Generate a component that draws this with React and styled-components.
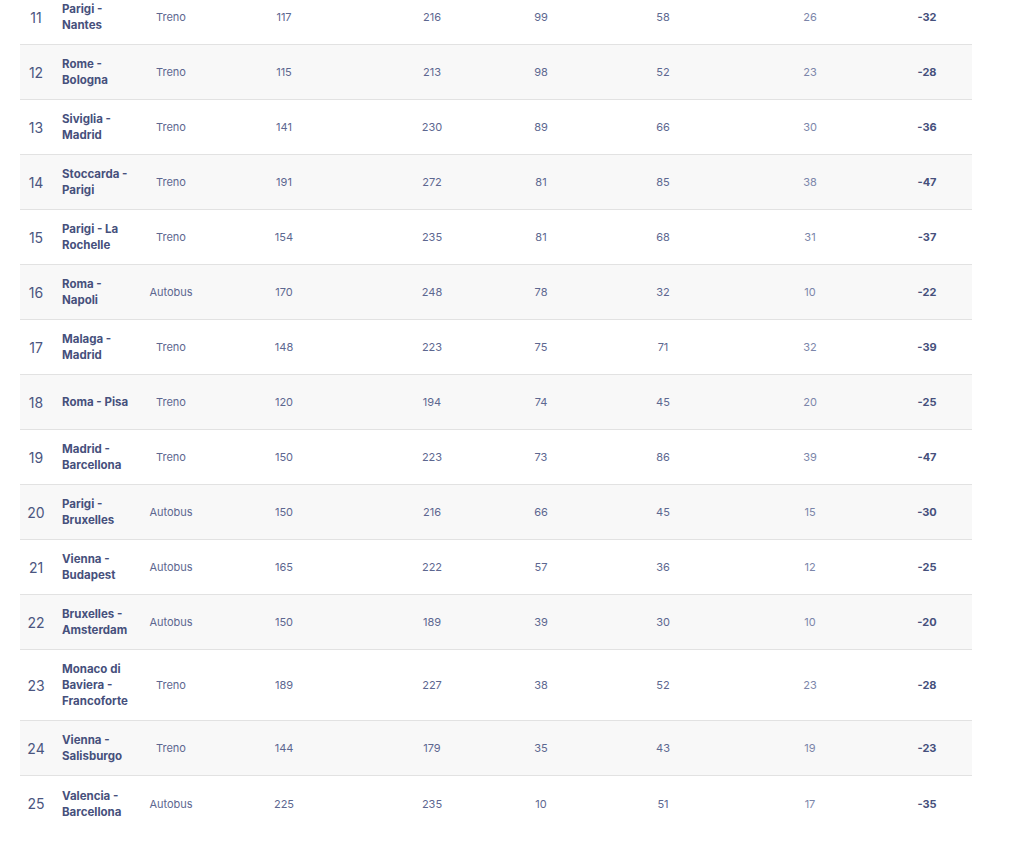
import React from "react";
import styled, { createGlobalStyle } from "styled-components";

const GlobalStyle = createGlobalStyle`
    body {
        margin: 0;
        background: #fff;
        font-family: "Inter", "Noto Sans", sans-serif;
        color: #47527d;
    }
`;

const rows = [
    [11, "Parigi - Nantes", "Treno", 117, 216, 99, 58, 26, -32],
    [12, "Rome - Bologna", "Treno", 115, 213, 98, 52, 23, -28],
    [13, "Siviglia - Madrid", "Treno", 141, 230, 89, 66, 30, -36],
    [14, "Stoccarda - Parigi", "Treno", 191, 272, 81, 85, 38, -47],
    [15, "Parigi - La Rochelle", "Treno", 154, 235, 81, 68, 31, -37],
    [16, "Roma - Napoli", "Autobus", 170, 248, 78, 32, 10, -22],
    [17, "Malaga - Madrid", "Treno", 148, 223, 75, 71, 32, -39],
    [18, "Roma - Pisa", "Treno", 120, 194, 74, 45, 20, -25],
    [19, "Madrid - Barcellona", "Treno", 150, 223, 73, 86, 39, -47],
    [20, "Parigi - Bruxelles", "Autobus", 150, 216, 66, 45, 15, -30],
    [21, "Vienna - Budapest", "Autobus", 165, 222, 57, 36, 12, -25],
    [22, "Bruxelles - Amsterdam", "Autobus", 150, 189, 39, 30, 10, -20],
    [23, "Monaco di Baviera - Francoforte", "Treno", 189, 227, 38, 52, 23, -28],
    [24, "Vienna - Salisburgo", "Treno", 144, 179, 35, 43, 19, -23],
    [25, "Valencia - Barcellona", "Autobus", 225, 235, 10, 51, 17, -35],
];

const Table = styled.div`
    width: 952px;
    margin: -10px 0 0 20px;
`;

const Row = styled.div`
    display: grid;
    grid-template-columns: 32px 92px 54px 172px 124px 94px 150px 144px 90px;
    align-items: center;
    min-height: 55px;
    box-sizing: border-box;
    padding: 11px 0;
    background: ${({ shaded }) => (shaded ? "#f8f8f8" : "#fff")};
    border-bottom: ${({ last }) => (last ? "none" : "1px solid #e2e2e2")};
`;

const Index = styled.div`
    text-align: center;
    font-size: 14px;
    color: #4b5680;
`;

const Route = styled.div`
    padding: 0 12px 0 10px;
    font-size: 11.5px;
    font-weight: 700;
    line-height: 16px;
    color: #46507c;
`;

const Cell = styled.div`
    text-align: center;
    font-size: 11px;
    font-weight: ${({ bold }) => (bold ? 700 : 400)};
    color: ${({ bold, muted }) =>
        bold ? "#46507c" : muted ? "#7c86aa" : "#5d6790"};
`;

const App = () => {
    return (
        <>
            <GlobalStyle />
            <Table>
                {rows.map(([n, route, mode, a, b, c, d, e, diff], i) => (
                    <Row key={n} shaded={i % 2 === 1} last={i === rows.length - 1}>
                        <Index>{n}</Index>
                        <Route>{route}</Route>
                        <Cell>{mode}</Cell>
                        <Cell>{a}</Cell>
                        <Cell>{b}</Cell>
                        <Cell>{c}</Cell>
                        <Cell>{d}</Cell>
                        <Cell muted>{e}</Cell>
                        <Cell bold>{diff}</Cell>
                    </Row>
                ))}
            </Table>
        </>
    );
};

export default App;
